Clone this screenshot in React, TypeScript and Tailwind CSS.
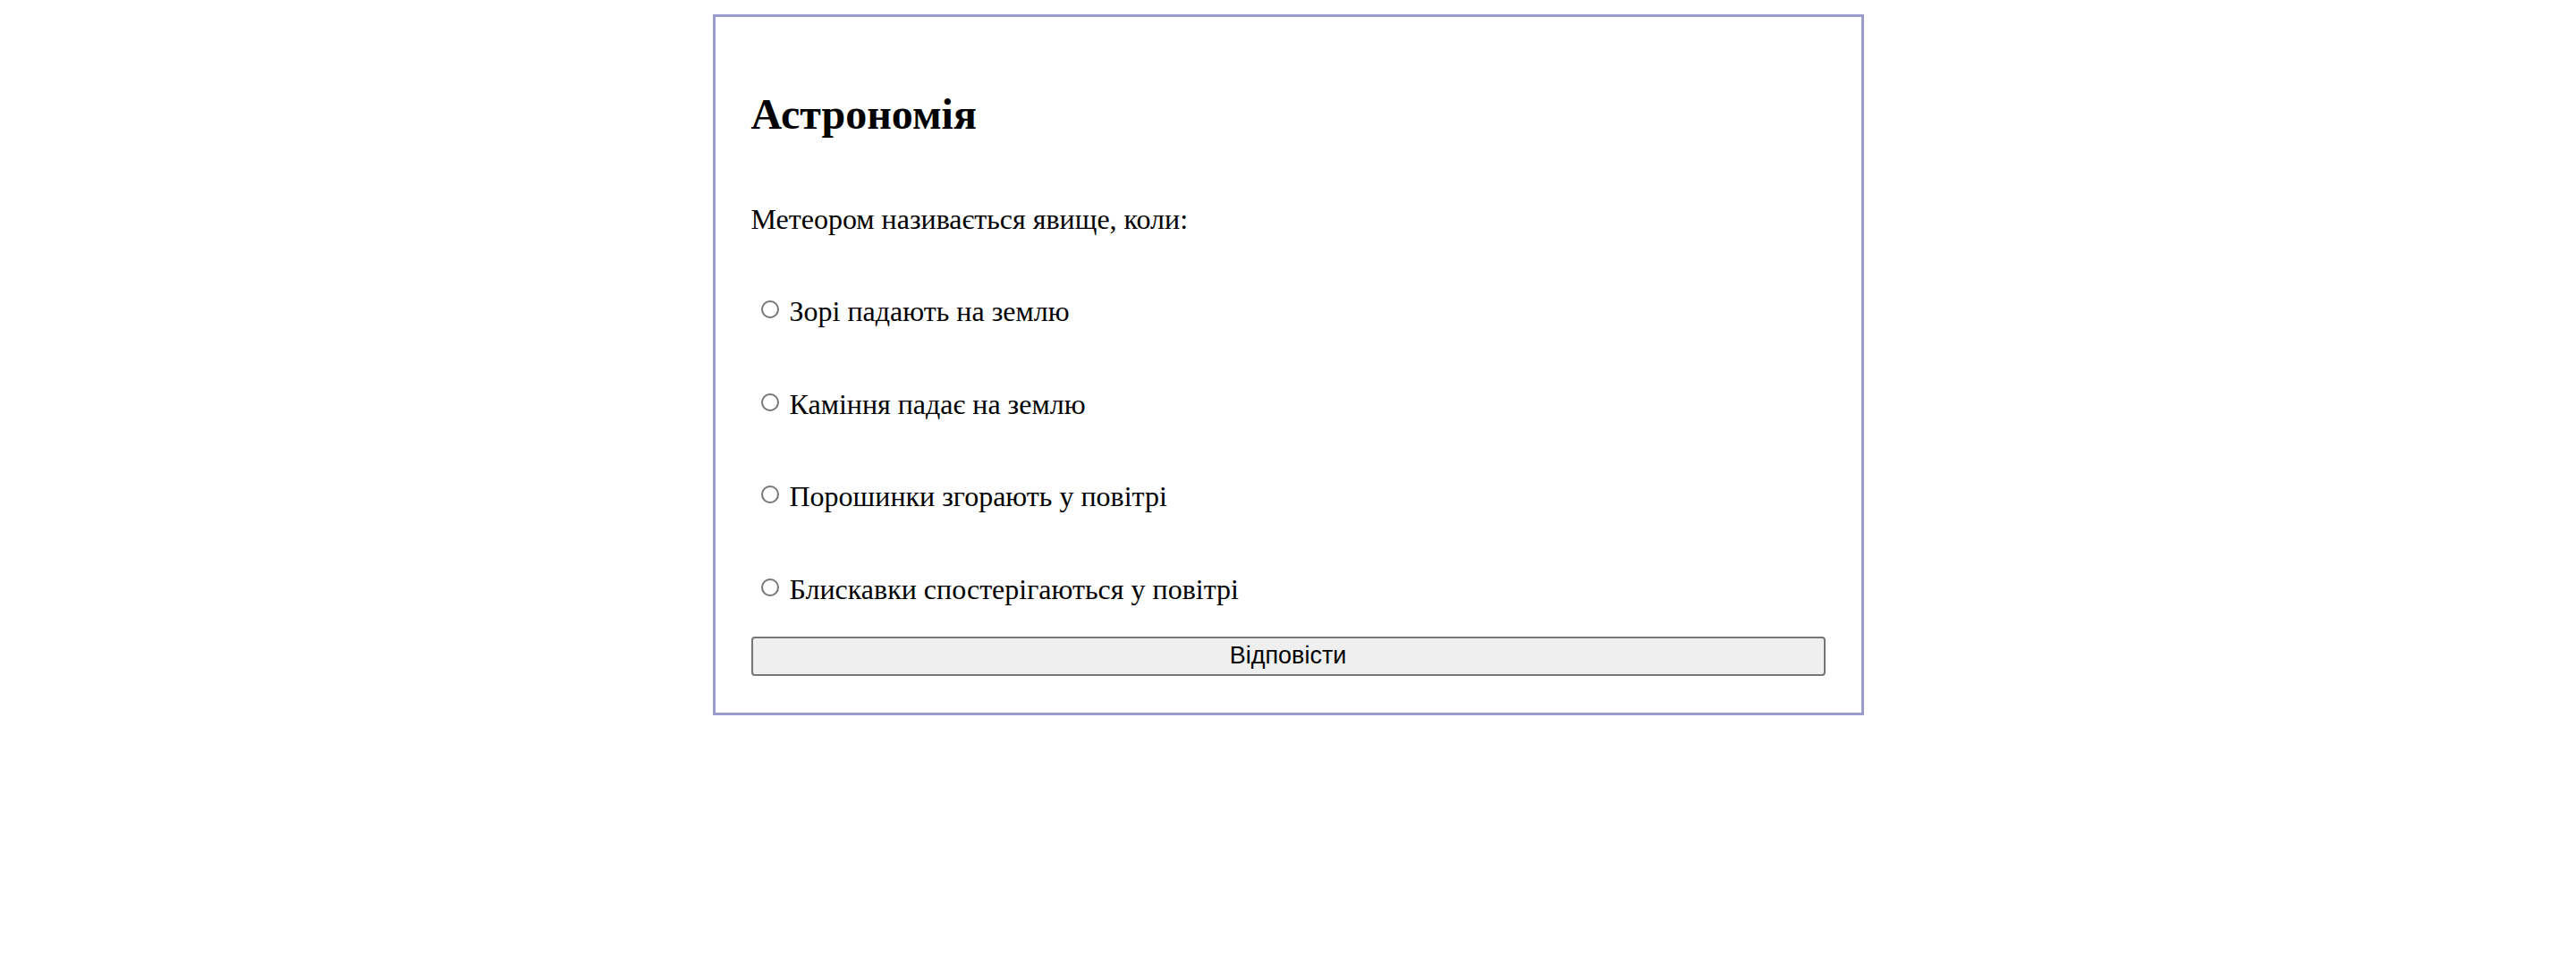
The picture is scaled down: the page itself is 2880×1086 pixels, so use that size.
import React from "react";

const options = [
  "Зорі падають на землю",
  "Каміння падає на землю",
  "Порошинки згорають у повітрі",
  "Блискавки спостерігаються у повітрі",
];

export const App = () => {
  return (
    <div className="min-h-[1086px] bg-white pt-[16px] font-['Liberation_Serif',serif] text-black">
      <div className="mx-auto w-[1287px] border-[3px] border-[#9b9bcc] px-[40px] pb-[41px] pt-[42px]">
        <h2 className="mt-[40px] text-[48px] font-bold leading-[54px]">Астрономія</h2>
        <p className="mt-[72px] text-[32px] leading-[36px]">Метеором називається явище, коли:</p>
        <div className="mt-[67px] flex flex-col gap-[67.6px]">
          {options.map((label) => (
            <label key={label} className="flex text-[32px] leading-[36px]">
              <input
                type="radio"
                name="answer"
                className="ml-[11px] mr-[12px] mt-[6px] h-[20px] w-[20px] shrink-0 appearance-none rounded-full border-2 border-[#767676] bg-white"
              />
              <span>{label}</span>
            </label>
          ))}
        </div>
        <button
          type="button"
          className="mt-[35px] block h-[44px] w-full rounded-[4px] border-2 border-[#767676] bg-[#efefef] font-['Liberation_Sans',sans-serif] text-[27px] leading-none text-black"
        >
          Відповісти
        </button>
      </div>
    </div>
  );
};

export default App;
